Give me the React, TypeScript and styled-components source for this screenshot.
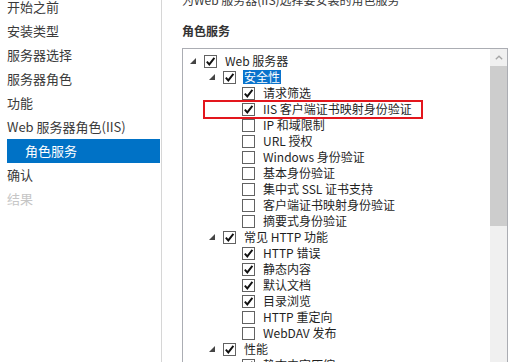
import styled, { createGlobalStyle } from "styled-components";

const GlobalStyle = createGlobalStyle`
  html, body {
    margin: 0;
    padding: 0;
    background: #ffffff;
    overflow: hidden;
  }
  body {
    font-family: "Noto Sans CJK SC", "Noto Sans", sans-serif;
  }
`;

type Node = {
  label: string;
  level: number;
  expanded?: boolean;
  checked?: boolean;
  selected?: boolean;
  flagged?: boolean;
};

const NAV = [
  { label: "开始之前" },
  { label: "安装类型" },
  { label: "服务器选择" },
  { label: "服务器角色" },
  { label: "功能" },
  { label: "Web 服务器角色(IIS)" },
  { label: "角色服务", active: true },
  { label: "确认" },
  { label: "结果", disabled: true },
];

const TREE: Node[] = [
  { label: "Web 服务器", level: 0, expanded: true, checked: true },
  { label: "安全性", level: 1, expanded: true, checked: true, selected: true },
  { label: "请求筛选", level: 2, checked: true },
  { label: "IIS 客户端证书映射身份验证", level: 2, checked: true, flagged: true },
  { label: "IP 和域限制", level: 2 },
  { label: "URL 授权", level: 2 },
  { label: "Windows 身份验证", level: 2 },
  { label: "基本身份验证", level: 2 },
  { label: "集中式 SSL 证书支持", level: 2 },
  { label: "客户端证书映射身份验证", level: 2 },
  { label: "摘要式身份验证", level: 2 },
  { label: "常见 HTTP 功能", level: 1, expanded: true, checked: true },
  { label: "HTTP 错误", level: 2, checked: true },
  { label: "静态内容", level: 2, checked: true },
  { label: "默认文档", level: 2, checked: true },
  { label: "目录浏览", level: 2, checked: true },
  { label: "HTTP 重定向", level: 2 },
  { label: "WebDAV 发布", level: 2 },
  { label: "性能", level: 1, expanded: true, checked: true },
  { label: "静态内容压缩", level: 2, checked: true },
];

const Window = styled.div`
  display: flex;
  width: 525px;
  height: 362px;
  overflow: hidden;
  background: #ffffff;
`;

const Sidebar = styled.nav`
  width: 162px;
  box-sizing: border-box;
  flex-shrink: 0;
  border-right: 1px solid #d6d6d6;
  padding: 0 1px 0 7px;
`;

const NavList = styled.div`
  display: flex;
  flex-direction: column;
  margin-top: -5px;
`;

const NavItem = styled.div<{ $active?: boolean; $disabled?: boolean }>`
  height: 24px;
  line-height: 24px;
  font-size: 13px;
  white-space: nowrap;
  padding-left: ${p => (p.$active ? "18px" : "0")};
  background: ${p => (p.$active ? "#0072c6" : "transparent")};
  color: ${p => (p.$active ? "#ffffff" : p.$disabled ? "#c6c6c6" : "#3a3a3a")};
`;

const Main = styled.main`
  flex: 1;
  display: flex;
  flex-direction: column;
  padding: 0 17px 0 20px;
  min-width: 0;
`;

const Description = styled.div`
  margin-top: -8px;
  font-size: 12px;
  line-height: 16px;
  color: #3a3a3a;
  white-space: nowrap;
`;

const Heading = styled.div`
  margin-top: 15px;
  font-size: 12px;
  line-height: 16px;
  font-weight: 700;
  color: #333333;
`;

const ListBox = styled.div`
  margin-top: 9px;
  flex: 1;
  display: flex;
  border: 1px solid #abadb3;
  border-bottom: none;
  min-height: 0;
`;

const TreeArea = styled.div`
  flex: 1;
  padding-top: 4px;
  overflow: hidden;
`;

const Row = styled.div<{ $level: number }>`
  position: relative;
  display: flex;
  align-items: center;
  height: 16px;
  padding-left: ${p => 7 + p.$level * 19}px;
  white-space: nowrap;
`;

const Expander = styled.span`
  width: 6px;
  height: 6px;
  margin-right: 8px;
  display: flex;
  flex-shrink: 0;
`;

const Box = styled.span`
  width: 13px;
  height: 13px;
  box-sizing: border-box;
  border: 1px solid #626262;
  background: #ffffff;
  margin-right: 8px;
  display: flex;
  align-items: center;
  justify-content: center;
  flex-shrink: 0;
`;

const Label = styled.span<{ $selected?: boolean }>`
  font-size: 12px;
  line-height: 14px;
  padding: 0 1px;
  margin-left: -1px;
  color: ${p => (p.$selected ? "#ffffff" : "#1f1f1f")};
  background: ${p => (p.$selected ? "#0a73cc" : "transparent")};
`;

const Annotation = styled.div`
  position: absolute;
  left: 20px;
  top: -1px;
  width: 220px;
  height: 19px;
  box-sizing: border-box;
  border: 2px solid #e3161d;
  pointer-events: none;
`;

const Scrollbar = styled.div`
  width: 17px;
  flex-shrink: 0;
  display: flex;
  flex-direction: column;
  background: #f0f0f0;
`;

const ArrowButton = styled.div`
  height: 17px;
  display: flex;
  align-items: center;
  justify-content: center;
`;

const Thumb = styled.div`
  height: 160px;
  background: #cdcdcd;
`;

function Check() {
  return (
    <svg width="11" height="11" viewBox="0 0 11 11">
      <path d="M1.8 5.6 L4.3 8.4 L9.4 1.8" fill="none" stroke="#111" strokeWidth="1.9" />
    </svg>
  );
}

function Triangle() {
  return (
    <svg width="6" height="6" viewBox="0 0 6 6">
      <polygon points="6,0 6,6 0,6" fill="#454545" />
    </svg>
  );
}

export default function App() {
  return (
    <>
      <GlobalStyle />
      <Window>
        <Sidebar>
          <NavList>
            {NAV.map(n => (
              <NavItem key={n.label} $active={n.active} $disabled={n.disabled}>
                {n.label}
              </NavItem>
            ))}
          </NavList>
        </Sidebar>
        <Main>
          <Description>为Web 服务器(IIS)选择要安装的角色服务</Description>
          <Heading>角色服务</Heading>
          <ListBox>
            <TreeArea>
              {TREE.map(node => (
                <Row key={node.label} $level={node.level}>
                  <Expander>{node.expanded && <Triangle />}</Expander>
                  <Box>{node.checked && <Check />}</Box>
                  <Label $selected={node.selected}>{node.label}</Label>
                  {node.flagged && <Annotation />}
                </Row>
              ))}
            </TreeArea>
            <Scrollbar>
              <ArrowButton>
                <svg width="8" height="5" viewBox="0 0 8 5">
                  <path d="M0.8 4.3 L4 1.2 L7.2 4.3" fill="none" stroke="#a6a6a6" strokeWidth="1.3" />
                </svg>
              </ArrowButton>
              <Thumb />
            </Scrollbar>
          </ListBox>
        </Main>
      </Window>
    </>
  );
}
